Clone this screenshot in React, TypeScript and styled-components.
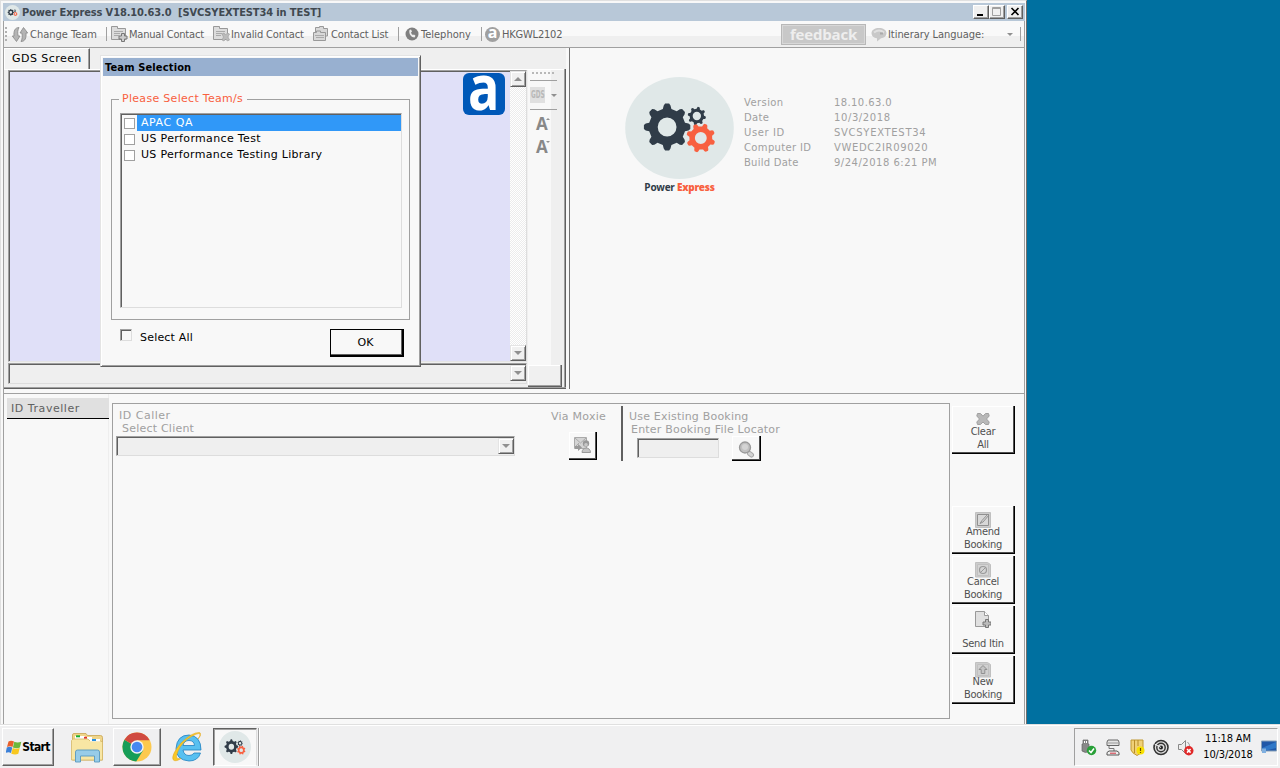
import React from 'react';
import styled, { createGlobalStyle, css } from 'styled-components';

const Global = createGlobalStyle`
  *{box-sizing:border-box}
  body{margin:0;background:#0070a0;overflow:hidden}
  svg{display:block;flex:none}
`;
const VERDANA = `'DejaVu Sans', Verdana, sans-serif`;
const TAHOMA = `'DejaVu Sans Condensed', 'DejaVu Sans', Tahoma, sans-serif`;

const Screen = styled.div`
  width:1280px;height:768px;display:flex;flex-direction:column;background:#0070a0;
  font:11px/13px ${VERDANA};font-stretch:normal;color:#000;
`;
const Text = styled.span<{ $ls?: number; $c?: string; $size?: number; $tahoma?: boolean; $bold?: boolean; $ml?: number }>`
  white-space:nowrap;display:block;
  letter-spacing:${p => p.$ls ?? 0}px;
  margin-left:${p => p.$ml ?? 0}px;
  ${p => p.$c && css`color:${p.$c};`}
  ${p => p.$size && css`font-size:${p.$size}px;`}
  ${p => p.$bold && css`font-weight:700;`}
  ${p => p.$tahoma && css`font-family:${TAHOMA};font-stretch:condensed;`}
`;

/* window frame */
const Window = styled.div`
  position:relative;width:1027px;height:724px;display:flex;flex-direction:column;
  background:#f8f8f8;border-top:1px solid #e0e0e0;border-left:1px solid #e0e0e0;border-right:1px solid #707070;
  padding:2px 1px 0 2px;
`;
const TitleBar = styled.div`
  height:18px;flex:none;display:flex;align-items:center;background:#b8c8d8;padding:0 2px 0 2px;
`;
const TitleButtons = styled.div`margin-left:auto;display:flex;`;
const WinButton = styled.div<{ $gap?: boolean }>`
  width:16px;height:14px;background:#f0f0f0;border:1px solid #fff;border-right-color:#606060;border-bottom-color:#606060;
  box-shadow:inset -1px -1px #a0a0a0;margin-left:${p => (p.$gap ? 2 : 0)}px;
`;
const Body = styled.div`
  flex:1;display:flex;flex-direction:column;border-left:1px solid #a0a0a0;border-right:1px solid #a0a0a0;min-height:0;
`;
const Toolbar = styled.div`
  height:27px;flex:none;display:flex;align-items:center;
  background:linear-gradient(#f9f9f9 0 15px,#efefef 15px);border-bottom:1px solid #a0a0a0;color:#606060;
`;
const Tool = styled.div<{ $w: number }>`
  width:${p => p.$w}px;height:24px;flex:none;display:flex;align-items:center;
`;
const Sep = styled.i<{ $mr: number }>`width:1px;height:14px;background:#a0a0a0;margin-right:${p => p.$mr}px;flex:none;`;
const Grip = styled.i`
  width:2px;height:15px;margin:0 5px 0 1px;flex:none;
  background:repeating-linear-gradient(#b0b0b0 0 2px,transparent 2px 4px);
`;
const Feedback = styled.div`
  width:85px;height:21px;margin-left:auto;margin-right:-1px;flex:none;background:#c8c8c8;border:1px solid #b8b8b8;box-shadow:inset 0 0 0 1px #d8d8d8;
  color:#eee;font:bold 15px/18px 'Open Sans',sans-serif;text-align:center;letter-spacing:-.2px;
`;
const BubbleSlot = styled.div`margin-left:6px;`;

/* upper area */
const Upper = styled.div`height:341px;flex:none;display:flex;background:#f8f8f8;`;
const Gds = styled.div`
  width:562px;flex:none;display:flex;flex-direction:column;background:#efefef;border-bottom:1px solid #606060;
  box-shadow:inset 0 -1px #a0a0a0;padding-bottom:1px;
`;
const Tab = styled.div`
  width:86px;height:21px;padding:3px 0 0 7px;background:#f3f3f3;border-left:1px solid #fff;border-top:1px solid #fff;
  border-right:1px solid #606060;box-shadow:inset -1px 0 #a0a0a0;
`;
const GdsPage = styled.div`
  flex:1;display:flex;padding:1px 0 0 4px;border-right:1px solid #606060;box-shadow:inset -1px 0 #a0a0a0,inset 0 1px #fff;
`;
const GdsLeft = styled.div`width:519px;display:flex;flex-direction:column;`;
const Terminal = styled.div`
  height:292px;display:flex;justify-content:flex-end;background:#e0e0f8;
  border:1px solid #a0a0a0;border-right-color:#ddd;border-bottom-color:#e4e4e4;box-shadow:inset 1px 1px #606060;padding:0 0 0 1px;
`;
const Logo = styled.div`
  width:42px;height:42px;margin:2px 5px 0 0;border-radius:6px;background:#0058b8;color:#fff;display:flex;justify-content:center;
  font:bold 62px/26px 'Open Sans',sans-serif;
  span{transform:scaleX(.84);}
`;
const ScrollBar = styled.div`
  width:16px;display:flex;flex-direction:column;justify-content:space-between;
  background:repeating-conic-gradient(#fff 0 25%,#ececec 0 50%) 0 0/2px 2px;
`;
const ArrowBtn = styled.div`
  width:16px;height:16px;flex:none;background:#f0f0f0;border:1px solid #e4e4e4;border-right-color:#606060;border-bottom-color:#606060;
  box-shadow:inset 1px 1px #fff,inset -1px -1px #a0a0a0;display:flex;align-items:center;justify-content:center;
`;
const Field = styled.div<{ $w: number; $h: number; $mt?: number; $ml?: number }>`
  width:${p => p.$w}px;height:${p => p.$h}px;margin:${p => p.$mt ?? 0}px 0 0 ${p => p.$ml ?? 0}px;flex:none;
  display:flex;justify-content:flex-end;background:#efefef;padding:1px 0 0 0;
  border:1px solid #a0a0a0;border-right-color:#ddd;border-bottom-color:#ddd;box-shadow:inset 1px 1px #606060;
`;
const GdsRight = styled.div`width:36px;display:flex;flex-direction:column;`;
const GdsTools = styled.div`
  flex:1;width:23px;margin-left:1px;background:#f8f8f8;display:flex;flex-direction:column;
`;
const Dots = styled.i`height:2px;width:22px;margin:2px 0 6px 4px;background:repeating-linear-gradient(90deg,#b8b8b8 0 2px,transparent 2px 4px);`;
const HLine = styled.i`height:1px;width:27px;margin-left:2px;background:#a0a0a0;`;
const GdsRow = styled.div`height:28px;width:30px;padding-left:2px;display:flex;align-items:center;gap:6px;`;
const GdsChip = styled.div`
  width:15px;height:16px;flex:none;background:#e0e0e0;color:#b8b8b8;display:flex;justify-content:center;
  font:bold 11px/16px 'DejaVu Sans Condensed',sans-serif;
  span{transform:scaleX(.58);}
`;
const FontBtn = styled.div`
  height:23px;padding:4px 0 0 8px;display:flex;color:#888;font:bold 17px/19px 'Open Sans',sans-serif;
  svg{margin:4px 0 0 -2px;}
`;
const SmallBox = styled.div`
  width:34px;height:22px;margin-left:1px;background:#f0f0f0;border-right:1px solid #606060;border-bottom:1px solid #606060;box-shadow:inset -1px -1px #a0a0a0,inset 1px 1px #fff;
`;
const Info = styled.div`
  flex:1;margin-left:3px;border-left:1px solid #707070;display:flex;padding:29px 0 0 55px;
`;
const Brand = styled.div`width:109px;display:flex;flex-direction:column;align-items:center;`;
const BrandName = styled.div`
  font:bold 10px/12px 'Open Sans',sans-serif;letter-spacing:-.25px;margin-top:2px;color:#303c48;white-space:nowrap;b{color:#f86040;}
`;
const Facts = styled.div`
  display:grid;grid-template-columns:90px 130px;grid-auto-rows:15px;align-content:start;padding:18px 0 0 10px;color:#a0a0a0;font-size:10px;line-height:15px;
`;

/* lower area */
const Lower = styled.div`flex:1;margin-top:4px;border-top:1px solid #a0a0a0;display:flex;background:#f8f8f8;min-height:0;`;
const Side = styled.div`width:105px;flex:none;border-right:1px solid #eee;padding:4px 0 0 3px;`;
const SideItem = styled.div`height:21px;width:102px;background:#e0e0e0;border-bottom:1px solid #000;padding:4px 0 0 4px;color:#606060;`;
const Panel = styled.div`
  width:838px;height:316px;margin:9px 0 0 3px;border:1px solid #a0a0a0;display:flex;align-items:flex-start;color:#a0a0a0;flex:none;
`;
const Col = styled.div<{ $w: number; $pt: number; $pl: number }>`
  width:${p => p.$w}px;flex:none;padding:${p => p.$pt}px 0 0 ${p => p.$pl}px;display:flex;flex-direction:column;
`;
const Divider = styled.i`width:2px;height:55px;margin-top:2px;background:#606060;flex:none;`;
const Row = styled.div`display:flex;align-items:flex-start;`;
const Push = styled.div<{ $w: number; $h: number; $mt?: number; $ml?: number }>`
  width:${p => p.$w}px;height:${p => p.$h}px;margin:${p => p.$mt ?? 0}px 0 0 ${p => p.$ml ?? 0}px;flex:none;
  border-right:1px solid #000;border-bottom:1px solid #000;box-shadow:inset -1px -1px #505050,inset 1px 1px #fff;
  display:flex;flex-direction:column;align-items:center;color:#505050;text-align:center;
`;
const IconSlot = styled.div`padding-top:5px;`;
const Actions = styled.div`display:flex;flex-direction:column;padding:12px 0 0 2px;`;
const ActionText = styled.div`
  font:11px/13px ${TAHOMA};font-stretch:condensed;margin-top:auto;padding-bottom:2px;white-space:pre-line;letter-spacing:-.25px;
  position:relative;top:-3px;
`;

/* dialog */
const Dialog = styled.div`
  position:absolute;left:99px;top:54px;width:321px;height:312px;background:#f8f8f8;
  border:1px solid #e4e4e4;border-right-color:#606060;border-bottom-color:#606060;
  box-shadow:inset 1px 1px #fff,inset -1px -1px #a0a0a0;padding:2px 2px;
`;
const DialogTitle = styled.div`height:18px;background:#98b0d0;display:flex;align-items:center;padding-left:2px;`;
const Group = styled.fieldset`
  width:299px;height:228px;margin:16px 0 0 8px;border:1px solid #a0a0a0;padding:6px 8px 0 8px;min-width:0;
  legend{padding:0 4px 0 3px;color:#f86040;margin-left:-1px;height:15px;line-height:14px;}
`;
const List = styled.div`
  width:282px;height:195px;border:1px solid #a0a0a0;border-right-color:#ddd;border-bottom-color:#ddd;box-shadow:inset 1px 1px #606060;padding:1px 0 0 1px;
`;
const ListRow = styled.div<{ $on?: boolean }>`
  height:16px;display:flex;align-items:center;
  span{flex:1;height:16px;line-height:16px;padding-left:4px;margin-left:2px;
    ${p => p.$on && css`background:#3098f8;color:#fff;`}}
`;
const Check = styled.i<{ $sunken?: boolean }>`
  width:${p => (p.$sunken ? 12 : 11)}px;height:${p => (p.$sunken ? 12 : 11)}px;flex:none;background:#fff;border:1px solid #a0a0a0;margin-left:2px;
  ${p => p.$sunken && css`margin:0;border-right-color:#ddd;border-bottom-color:#ddd;box-shadow:inset 1px 1px #606060;background:#f8f8f8;`}
`;
const DialogFoot = styled.div`display:flex;padding:9px 0 0 17px;`;
const FootText = styled.div`padding-top:2px;margin-left:8px;`;
const Ok = styled.div`
  width:74px;height:28px;margin-left:auto;margin-right:14px;border:1px solid #000;border-right-width:2px;border-bottom-width:2px;
  box-shadow:inset -1px -1px #606060;display:flex;align-items:center;justify-content:center;padding-right:2px;
`;

/* taskbar */
const Taskbar = styled.div`height:44px;display:flex;background:#f0f0f1;border-top:1px solid #e0e0e0;box-shadow:inset 0 1px #fff;padding:3px 2px 2px;`;
const TaskBtn = styled.div<{ $w: number; $ml?: number; $flat?: boolean; $down?: boolean }>`
  width:${p => p.$w}px;height:38px;margin-left:${p => p.$ml ?? 0}px;display:flex;align-items:center;justify-content:center;flex:none;
  ${p => !p.$flat && css`border:1px solid #fff;border-right-color:#606060;border-bottom-color:#606060;box-shadow:inset -1px -1px #a0a0a0;`}
  ${p => p.$down && css`background:#f8f8f8;border:1px solid #606060;border-right-color:#ddd;border-bottom-color:#fff;box-shadow:inset 1px 1px #a0a0a0;`}
`;
const TaskEdge = styled.i`width:2px;height:38px;margin-left:1px;border-left:1px solid #a0a0a0;border-right:1px solid #fff;`;
const Tray = styled.div`
  margin-left:auto;width:204px;height:38px;border:1px solid #a0a0a0;border-right-color:#fff;border-bottom-color:#fff;
  display:flex;align-items:center;padding-left:5px;gap:8px;
`;
const Clock = styled.div`width:52px;margin-left:1px;text-align:center;font:11px/16px ${TAHOMA};font-stretch:condensed;white-space:nowrap;letter-spacing:-.15px;`;

/* outline of a cog wheel with rounded-off trapezoid teeth and a hole */
function cog(cx: number, cy: number, r: number, teeth: number, hole: number, turn = 0) {
  const step = (Math.PI * 2) / teeth;
  const at = (rad: number, a: number) => `${(cx + rad * Math.cos(a)).toFixed(2)} ${(cy + rad * Math.sin(a)).toFixed(2)}`;
  const pts: string[] = [];
  for (let i = 0; i < teeth; i++) {
    const a = i * step + turn;
    pts.push(at(r * 0.79, a - step * 0.3), at(r * 0.93, a - step * 0.2), at(r, a - step * 0.11), at(r, a + step * 0.11), at(r * 0.93, a + step * 0.2), at(r * 0.79, a + step * 0.3));
  }
  return `M${pts.join('L')}ZM${cx + hole} ${cy}a${hole} ${hole} 0 1 0 ${-2 * hole} 0a${hole} ${hole} 0 1 0 ${2 * hole} 0Z`;
}
const Cogs = ({ w, h }: { w: number; h: number }) => (
  <svg width={w} height={h} viewBox="0 0 110 102" preserveAspectRatio="none">
    <ellipse cx="55" cy="51" rx="54.8" ry="51" fill="#e0e8e8" />
    <g fillRule="evenodd">
      <path d={cog(42.5, 50, 23.5, 8, 9.5, 0)} fill="#303c48" />
      <path d={cog(72.5, 39, 9.2, 8, 4.2, 0.2)} fill="#303c48" />
      <path d={cog(76.5, 61, 14.7, 8, 6, 0.35)} fill="#f86040" />
    </g>
  </svg>
);
const Caret = ({ up, w = 8 }: { up?: boolean; w?: number }) => (
  <svg width={w} height={w / 2} viewBox="0 0 8 4"><path d={up ? 'M0 4L4 0L8 4Z' : 'M0 0H8L4 4Z'} fill="#909090" /></svg>
);
const Card = ({ kind }: { kind: 'plus' | 'x' | 'list' }) => (
  <svg width="17" height="16" viewBox="0 0 17 16">
    {kind === 'list' ? (
      <g fill="#d8d8d8" stroke="#999">
        <path d="M2.500 6V1.500h4V.5h4v2h4V10h-2" /><path d="M.5 14.500v-8h3v-1.500h4v1.500h5v8z" /><path d="M2 9.500h9M3 11.500h8" stroke="#aaa" />
      </g>
    ) : (
      <>
        <path d="M.5 13.500V.5h6v2h8v11z" fill="#dcdcdc" stroke="#999" />
        <path d="M3 5.500h9M3 7.500h6M3 9.500h5" stroke="#aaa" />
        {kind === 'plus'
          ? <path d="M10.500 7.500h3v2.500h2.500v3h-2.500v2.500h-3v-2.500H8v-3h2.500z" fill="#ccc" stroke="#777" />
          : <path d="M9 8l2-1 1.500 2 2-2 2 1-1.500 3 1.500 3-2 1-2-2-1.500 2-2-1 1.500-3z" fill="#bbb" stroke="#999" strokeWidth=".6" />}
      </>
    )}
  </svg>
);
const Swap = () => (
  <svg width="16" height="15" viewBox="0 0 16 15">
    <g fill="#b4b4b4" stroke="#888" strokeWidth=".8">
      <path d="M7 .5C3 .5 1.500 4 2 9H.3L4.500 14.500 8 9H6.200C5.500 6 5.500 3.500 7 .5z" />
      <path d="M9 14.500c4 0 5.500-3.500 5-8.500h1.700L11.500.5 8 6h1.800c.7 3 .7 5.500-.8 8.500z" />
    </g>
  </svg>
);
const Phone = () => (
  <svg width="14" height="14" viewBox="0 0 14 14"><circle cx="7" cy="7" r="6.500" fill="#808080" />
    <path d="M4.500 3l1.500-.5 1 2-1 1q.5 2 2 2.500l1-.6 1.500 1.400-1 1.700C6.500 10.500 3.500 7 4.500 3z" fill="#eee" /></svg>
);
const Amadeus = styled.span`
  width:15px;height:15px;border-radius:50%;background:#a0a0a0;color:#fff;font:bold 16px/10px 'Open Sans',sans-serif;text-align:center;flex:none;
`;
const Bubble = () => (
  <svg width="16" height="15" viewBox="0 0 16 15"><path d="M8 1c4 0 7.500 2 7.500 5S13 11 10 11.300L6 14.500v-3.200C3 11 .5 9 .5 6S4 1 8 1z" fill="#c8c8c8" /><path d="M3 5.500q5-4 10 0" stroke="#e0e0e0" fill="none" strokeWidth="2" /><path d="M9 5.500h3v2H9z" fill="#aaa" /></svg>
);
const MoxieIcon = () => (
  <svg width="17" height="17" viewBox="0 0 17 17">
    <path d="M.5.5h12v11H.5z" fill="#d4d4d4" stroke="#aaa" /><path d="M1 1l5.500 5L12 1M1 10l4-4" stroke="#aaa" fill="none" />
    <path d="M1 9h3V7l4 3.500L4 14v-2H1z" fill="#999" /><path d="M8 15.500c0-6 8.500-6 8.500 0z" fill="#c4c4c4" stroke="#999" /><circle cx="12" cy="6.500" r="3.200" fill="#999" /><circle cx="12" cy="7.800" r="1.800" fill="#c8c8c8" />
  </svg>
);
const Lens = () => (
  <svg width="17" height="17" viewBox="0 0 17 17"><path d="M11.500 12.500l2 1.500" stroke="#a8a8a8" strokeWidth="5" strokeLinecap="round" /><path d="M11.500 12.500l2 1.500" stroke="#d4d4d4" strokeWidth="3" strokeLinecap="round" /><circle cx="7" cy="6.500" r="5.500" fill="#c0c0c0" stroke="#999" strokeWidth="1.300" /><circle cx="7" cy="6" r="3" fill="#d4d4d4" /></svg>
);
const ActionIcon = ({ kind }: { kind: string }) => (
  <svg width="16" height="17" viewBox="0 0 16 17">
    {kind === 'clear' && <path d="M2.500 2.500h3l2.500 2.700L10.500 2.500h3l.7 2.500-2.700 3 2.700 3-.7 2.500h-3L8 11l-2.500 2.500h-3L1.800 11l2.700-3-2.700-3z" fill="#b8b8b8" stroke="#a0a0a0" strokeLinejoin="round" />}
    {kind === 'send' && <><path d="M.5.5h9l4 4v11H.5z" fill="#e0e0e0" stroke="#999" /><path d="M9.500.5v4h4" fill="#fff" stroke="#999" /><path d="M10.500 8.500h3v2.500H16v3h-2.500v2.500h-3V14H8v-3h2.500z" fill="#bbb" stroke="#777" /></>}
    {['amend', 'cancel', 'new'].includes(kind) && <path d={kind === 'amend' ? 'M.5 1.500h15v15H.5z' : 'M.5 1.500h12l3 2v12.500H.5z'} fill="#ccc" stroke="#c0c0c0" />}
    {kind === 'amend' && <path d="M2.500 3.500h11v11h-11zM5 12.500l2-3 6-6.500 1 1-6 7z" fill="#d8d8d8" stroke="#909090" />}
    {kind === 'cancel' && <><path d="M2.500 3.500h11v11h-11z" fill="#d4d4d4" stroke="#c0c0c0" /><circle cx="8" cy="9" r="3.500" fill="none" stroke="#999" strokeWidth="1.200" /><path d="M5.500 11.500l5-5" stroke="#999" /></>}
    {kind === 'new' && <><path d="M2.500 3.500h11v11h-11z" fill="#d0d0d0" stroke="#c0c0c0" /><path d="M8 4.500l4 4H9.800v4H6.200v-4H4z" fill="#c4c4c4" stroke="#909090" /></>}
  </svg>
);
const WinFlag = () => (
  <svg width="16" height="15" viewBox="0 0 16 15"><path d="M2.500 1.500Q5 0 8 1.500L6.500 7Q4 5.500 1 7z" fill="#e8602c" /><path d="M8.300 1.800q3 1.500 7 0L13.900 7.500q-3 1.500-7 0z" fill="#6cb83c" /><path d="M.8 7.500Q3.500 6 6.300 7.500l-1.300 5.500Q2.500 11.500-.4 13z" fill="#3c80d8" /><path d="M6.700 8q3 1.500 7 0L12.300 13.700q-3 1.500-7 0z" fill="#f8c820" /></svg>
);
const Folder = () => (
  <svg width="34" height="32" viewBox="0 0 34 32">
    <path d="M2.500 29V4q0-1.500 1.500-1.500h12l1.500 2h13q2 0 2 2V29z" fill="#efd58a" stroke="#c9a550" strokeWidth=".8" />
    <path d="M5 5h10v3H5zM14 6h8v3h-8z" fill="#fff" /><path d="M6 5.300h4" stroke="#18b030" strokeWidth="2" /><path d="M14 6.800h3" stroke="#e03030" strokeWidth="2" />
    <path d="M1.500 29V9.500L3 8h15l2 2h11l1.500 1.500V29z" fill="#f8e6a4" stroke="#d4b868" strokeWidth=".8" /><path d="M20 8h10v2.500H20z" fill="#fff" /><path d="M22 9h4" stroke="#2890e0" strokeWidth="2" />
    <path d="M5.500 31V21q0-2 2-2h20q2 0 2 2v10h-5v-6h-14v6z" fill="#98cce8" stroke="#5898c0" strokeWidth=".9" />
  </svg>
);
const Chrome = () => (
  <svg width="30" height="30" viewBox="0 0 30 30">
    <circle cx="15" cy="15" r="14.500" fill="#fcc94e" />
    <path d="M15 15L2.400 7.700A14.500 14.500 0 0 0 14.200 29.500L21 18.500z" fill="#169d58" />
    <path d="M15 15L2.400 7.700A14.500 14.500 0 0 1 27.600 8.200H15z" fill="#d04a40" /><circle cx="15" cy="15" r="6.700" fill="#f4f4f4" /><circle cx="15" cy="15" r="5.300" fill="#4688f1" />
  </svg>
);
const IE = () => (
  <svg width="32" height="32" viewBox="0 0 32 32">
    <path d="M29 19H11q1 5.500 6 5.500 3.500 0 5-2.500h6.500Q26 30 17 30 4 29 4 17.500 5 4 17 4q12 1 12 15zM11 14.500h11.500Q22 9.500 17 9.500T11 14.500z" fill="#58c0f0" stroke="#2080c0" strokeWidth=".8" fillRule="evenodd" />
    <path d="M26 8q4-6 1.500-6.500Q20 1 9 12-1 24 1 28.500q2 3 8-1-5 1-4.500-3Q7 15 15 8.500 26 1 28 3q1.500 1.500-2 5z" fill="#f8c828" stroke="#e0a010" strokeWidth=".5" />
  </svg>
);
const TrayIcons = () => (
  <>
    <svg width="17" height="17" viewBox="0 0 17 17"><path d="M3 1h5v4h1v7q-3 3-7 0V5h1z" fill="#888" stroke="#666" strokeWidth=".7" /><path d="M4 2h1v2H4zM6 2h1v2H6z" fill="#fff" /><circle cx="11.500" cy="11.500" r="4.700" fill="#28a038" /><path d="M9 11.500l2 2 3-4" fill="none" stroke="#fff" strokeWidth="1.500" /></svg>
    <svg width="16" height="17" viewBox="0 0 16 17"><path d="M3 1h10l1 2v3.500H2V3z" fill="#e4e4e4" stroke="#666" /><path d="M3 4h10" stroke="#999" /><path d="M4 7v2.500h5V12" fill="none" stroke="#777" /><path d="M2 13.500l2-1.500h8l2 1.500v2.500H2z" fill="#eee" stroke="#555" /><path d="M5 14.200h6" stroke="#d03040" /></svg>
    <svg width="16" height="17" viewBox="0 0 16 17"><path d="M2 1h12v10q-2 4-6 5.500Q3 14 2 11z" fill="#f0d078" stroke="#c09830" /><path d="M5.500 1v13M9 1v6" stroke="#b88c28" /><circle cx="11.500" cy="11.500" r="4" fill="#f8e000" /><path d="M11.500 9v3M11.500 13v1" stroke="#705000" strokeWidth="1.200" /></svg>
    <svg width="16" height="17" viewBox="0 0 16 17"><circle cx="8" cy="8.500" r="7" fill="#ddd" stroke="#333" strokeWidth="1.600" /><circle cx="8" cy="8.500" r="4.200" fill="none" stroke="#333" strokeWidth="1.400" /><circle cx="8" cy="8.500" r="2" fill="#222" /><path d="M8 8.500L1.500 5" stroke="#eee" /></svg>
    <svg width="17" height="17" viewBox="0 0 17 17"><path d="M1.500 5.500h3l4-4v13l-4-4h-3z" fill="#eee" stroke="#888" /><path d="M10.500 3q2.500 2 2 5" fill="none" stroke="#999" /><circle cx="11.800" cy="11.800" r="4.700" fill="#e02828" /><path d="M10 10l3.600 3.600M13.600 10L10 13.600" stroke="#fff" strokeWidth="1.500" /></svg>
  </>
);

const facts = [
  ['Version', '18.10.63.0', 0.2, 0.4], ['Date', '10/3/2018', 0.1, 0.6], ['User ID', 'SVCSYEXTEST34', 0.4, 0.7],
  ['Computer ID', 'VWEDC2IR09020', 0.15, 0.65], ['Build Date', '9/24/2018 6:21 PM', 0.05, 0.5],
] as const;
const teams = [
  ['APAC QA', 0.55], ['US Performance Test', 0.34], ['US Performance Testing Library', 0.3],
] as const;
const actions = [
  ['clear', 'Clear\nAll', 0], ['amend', 'Amend\nBooking', 52], ['cancel', 'Cancel\nBooking', 2], ['send', 'Send Itin', 2], ['new', 'New\nBooking', 2],
] as const;

export default function App() {
  return (
    <Screen>
      <Global />
      <Window>
        <TitleBar>
          <Cogs w={15} h={15} />
          <Text $tahoma $bold $c="#404850" $ml={2} $ls={-0.12}>Power Express V18.10.63.0&nbsp; [SVCSYEXTEST34 in TEST]</Text>
          <TitleButtons>
            <WinButton><svg width="14" height="12"><path d="M3 9h6" stroke="#000" strokeWidth="2" /></svg></WinButton>
            <WinButton><svg width="14" height="12"><path d="M2.500 1.500h8v8h-8zM2.500 2.500h8" fill="none" stroke="#a0a0a0" /></svg></WinButton>
            <WinButton $gap><svg width="14" height="12"><path d="M3.500 2l7 7M10.500 2l-7 7" stroke="#000" strokeWidth="1.600" /></svg></WinButton>
          </TitleButtons>
        </TitleBar>
        <Body>
          <Toolbar>
            <Grip />
            <Tool $w={94}><Swap /><Text $tahoma $ml={2}>Change Team</Text></Tool>
            <Sep $mr={4} />
            <Tool $w={102}><Card kind="plus" /><Text $tahoma $ml={1} $ls={-0.2}>Manual Contact</Text></Tool>
            <Tool $w={100}><Card kind="x" /><Text $tahoma $ml={1} $ls={-0.12}>Invalid Contact</Text></Tool>
            <Tool $w={85}><Card kind="list" /><Text $tahoma $ml={1} $ls={-0.15}>Contact List</Text></Tool>
            <Sep $mr={6} />
            <Tool $w={76}><Phone /><Text $tahoma $ml={2}>Telephony</Text></Tool>
            <Sep $mr={3} />
            <Tool $w={90}><Amadeus>a</Amadeus><Text $tahoma $ml={2} $ls={-0.2}>HKGWL2102</Text></Tool>
            <Feedback>feedback</Feedback>
            <Tool $w={142}><BubbleSlot><Bubble /></BubbleSlot><Text $tahoma $ml={1} $ls={-0.05}>Itinerary Language:</Text></Tool>
            <Tool $w={13}><Caret w={6} /></Tool>
            <Sep $mr={3} />
          </Toolbar>
          <Upper>
            <Gds>
              <Tab><Text $ls={0.45}>GDS Screen</Text></Tab>
              <GdsPage>
                <GdsLeft>
                  <Terminal>
                    <Logo><span>a</span></Logo>
                    <ScrollBar><ArrowBtn><Caret up /></ArrowBtn><ArrowBtn><Caret /></ArrowBtn></ScrollBar>
                  </Terminal>
                  <Field $w={519} $h={21} $mt={1}><ArrowBtn><Caret /></ArrowBtn></Field>
                </GdsLeft>
                <GdsRight>
                  <GdsTools>
                    <Dots /><HLine />
                    <GdsRow><GdsChip><span>GDS</span></GdsChip><Caret w={6} /></GdsRow>
                    <HLine />
                    <FontBtn>A<Caret up w={4} /></FontBtn>
                    <FontBtn>A<Caret w={4} /></FontBtn>
                  </GdsTools>
                  <SmallBox />
                </GdsRight>
              </GdsPage>
            </Gds>
            <Info>
              <Brand><Cogs w={109} h={102} /><BrandName>Power <b>Express</b></BrandName></Brand>
              <Facts>
                {facts.map(([k, v, a, b]) => (
                  <React.Fragment key={k}><Text $ls={a + 0.2}>{k}</Text><Text $ls={b}>{v}</Text></React.Fragment>
                ))}
              </Facts>
            </Info>
          </Upper>
          <Lower>
            <Side><SideItem><Text $ls={0.55}>ID Traveller</Text></SideItem></Side>
            <Panel>
              <Col $w={437} $pt={5} $pl={3}>
                <Text $ml={3} $ls={0.5}>ID Caller</Text>
                <Text $ml={6} $ls={0.22}>Select Client</Text>
                <Field $w={399} $h={20} $mt={1}><ArrowBtn><Caret /></ArrowBtn></Field>
              </Col>
              <Col $w={71} $pt={6} $pl={1}>
                <Text $ls={0.25}>Via Moxie</Text>
                <Push $w={28} $h={28} $mt={9} $ml={18}><IconSlot><MoxieIcon /></IconSlot></Push>
              </Col>
              <Divider />
              <Col $w={200} $pt={6} $pl={6}>
                <Text $ls={0.2}>Use Existing Booking</Text>
                <Text $ml={2} $ls={0.2}>Enter Booking File Locator</Text>
                <Row>
                  <Field $w={82} $h={20} $mt={2} $ml={8} />
                  <Push $w={29} $h={25} $ml={13}><IconSlot><Lens /></IconSlot></Push>
                </Row>
              </Col>
            </Panel>
            <Actions>
              {actions.map(([k, t, mt]) => (
                <Push key={k} $w={63} $h={48} $mt={mt}>
                  <IconSlot><ActionIcon kind={k} /></IconSlot>
                  {k === 'send' ? <SendText>{t}</SendText> : <ActionText>{t}</ActionText>}
                </Push>
              ))}
            </Actions>
          </Lower>
        </Body>
        <Dialog>
          <DialogTitle><Text $tahoma $bold $ls={0.15}>Team Selection</Text></DialogTitle>
          <Group>
            <legend><Text $ls={0.3}>Please Select Team/s</Text></legend>
            <List>
              {teams.map(([name, ls], i) => (
                <ListRow key={name} $on={i === 0}><Check /><Text $ls={ls}>{name}</Text></ListRow>
              ))}
            </List>
          </Group>
          <DialogFoot>
            <Check $sunken /><FootText><Text $ls={0.2}>Select All</Text></FootText>
            <Ok>OK</Ok>
          </DialogFoot>
        </Dialog>
      </Window>
      <Taskbar>
        <TaskBtn $w={52}><WinFlag /><Text $tahoma $bold $size={12} $ls={-0.65}>Start</Text></TaskBtn>
        <TaskBtn $w={36} $ml={15} $flat><Folder /></TaskBtn>
        <TaskBtn $w={48} $ml={8}><Chrome /></TaskBtn>
        <TaskBtn $w={34} $ml={10} $flat><IE /></TaskBtn>
        <TaskBtn $w={44} $ml={8} $down><Cogs w={32} h={32} /></TaskBtn>
        <TaskEdge />
        <Tray>
          <TrayIcons />
          <Clock>11:18 AM<br />10/3/2018</Clock>
          <svg width="16" height="16" viewBox="0 0 16 16"><path d="M.5 2h15v10h-15z" fill="#2058a8" stroke="#88a0b8" /><path d="M1 9l14-6v6L3 12z" fill="#3078c8" /><path d="M1 9.500h4V14H1z" fill="#80b0e0" /></svg>
        </Tray>
      </Taskbar>
    </Screen>
  );
}

const SendText = styled(ActionText)`top:-1px;`;
